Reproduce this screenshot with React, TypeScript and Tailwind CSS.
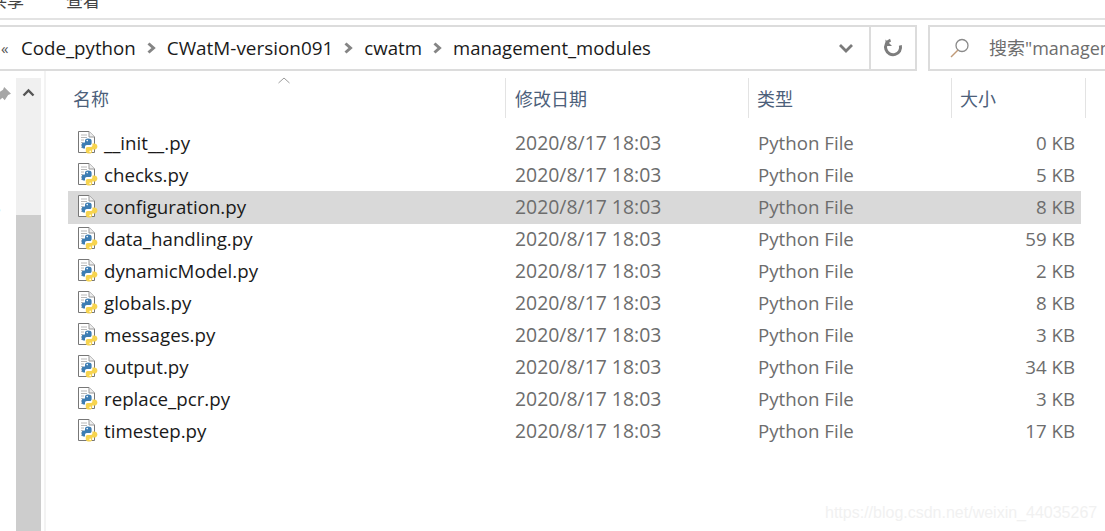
const font = { fontFamily: '"Open Sans", "Noto Sans CJK SC", sans-serif' };

const files = [
  ["__init__.py", "0 KB"],
  ["checks.py", "5 KB"],
  ["configuration.py", "8 KB"],
  ["data_handling.py", "59 KB"],
  ["dynamicModel.py", "2 KB"],
  ["globals.py", "8 KB"],
  ["messages.py", "3 KB"],
  ["output.py", "34 KB"],
  ["replace_pcr.py", "3 KB"],
  ["timestep.py", "17 KB"],
];

function Chevron() {
  return (
    <svg width="9" height="12" viewBox="0 0 9 12" className="shrink-0 mx-[11px]">
      <path d="M1.5 1.5 6.5 6 1.5 10.5" fill="none" stroke="#858585" strokeWidth="3" />
    </svg>
  );
}

function PyIcon() {
  return (
    <svg width="21" height="23" viewBox="0 0 21 23" className="shrink-0">
      <path d="M1.5 .5H12L17.5 6V21.5H1.5Z" fill="#fff" stroke="#777" strokeWidth="1" />
      <path d="M12 .5V6H17.5" fill="#eee" stroke="#999" strokeWidth="1" />
      <path d="M4 4h6M4 6.5h6M4 9h3M4 11.5h2M4 14h2M4 16.5h2" stroke="#b8b8b8" strokeWidth="1" />
      <path d="M11 7.5C8.6 7.5 8 8.5 8 9.8V11.5H6.6C5.2 11.5 4.6 12.8 4.6 14.4S5.2 17.4 6.6 17.4H8V15.8C8 14.8 8.8 14 9.8 14H12.8C13.8 14 14.6 13.2 14.6 12.2V9.8C14.6 8.4 13.2 7.5 11 7.5Z" fill="#3d7db3" />
      <path d="M15.4 12.4V14.2C15.4 15.2 14.6 16 13.6 16H10.6C9.6 16 8.8 16.8 8.8 17.8V20.2C8.8 21.6 10.2 22.5 12.2 22.5C14.4 22.5 15.2 21.6 15.2 20.2V18.5H17.2C19 18.5 20.4 17.4 20.4 15.4S19 12.4 17.2 12.4Z" fill="#f7d44f" />
      <circle cx="10.2" cy="9.6" r="0.8" fill="#fff" />
      <circle cx="13.2" cy="20.4" r="0.8" fill="#fff" />
    </svg>
  );
}

export default function App() {
  return (
    <div className="w-[1105px] h-[531px] overflow-hidden bg-white flex flex-col relative" style={font}>
      {/* ribbon tabs, cut off by the crop */}
      <div className="h-[20px] shrink-0 border-b-2 border-[#e3e3e3] overflow-hidden flex items-end text-[17px] text-[#444] leading-[24px] pb-[5px]">
        <span className="ml-[-10px] w-[76px]">共享</span>
        <span>查看</span>
      </div>

      {/* address + search */}
      <div className="mt-[5px] h-[46px] shrink-0 flex">
        <div className="w-[917px] border-y-2 border-r-2 border-[#dcdcdc] flex items-center text-[18.7px] text-[#1a1a1a]">
          <span className="w-[21px] pl-[1px] text-[15px] text-[#555] leading-none">«</span>
          <span>Code_python</span>
          <Chevron />
          <span className="text-[18.9px]">CWatM-version091</span>
          <Chevron />
          <span>cwatm</span>
          <Chevron />
          <span className="text-[18.5px]">management_modules</span>
          <div className="ml-auto h-full flex items-center">
            <svg width="16" height="10" viewBox="0 0 16 10" className="mr-[15px]">
              <path d="M2 2 8 8 14 2" fill="none" stroke="#7a7a7a" strokeWidth="2.8" />
            </svg>
            <div className="w-[46px] h-full border-l-2 border-[#dcdcdc] flex items-center justify-center">
              <svg width="20" height="20" viewBox="0 0 20 20">
                <path d="M5 3.5A7.5 7.5 0 1 0 16 5" fill="none" stroke="#7d7d7d" strokeWidth="3" transform="rotate(20 10 10)" />
                <path d="M2.5 1.5V8H9Z" fill="#7d7d7d" />
              </svg>
            </div>
          </div>
        </div>
        <div className="ml-[11px] flex-1 border-y-2 border-l-2 border-[#dcdcdc] flex items-center text-[18px] text-[#6d6d6d] overflow-hidden whitespace-nowrap">
          <svg width="20" height="20" viewBox="0 0 20 20" className="ml-[20px] mr-[19px] shrink-0">
            <circle cx="12" cy="7.5" r="6" fill="none" stroke="#8a8a8a" strokeWidth="1.3" />
            <path d="M8 12 1 19" stroke="#c09a78" strokeWidth="1.5" />
          </svg>
          <span>搜索"management_modules"</span>
        </div>
      </div>

      <div className="flex-1 flex min-h-0">
        {/* nav pane edge */}
        <div className="w-[16px] shrink-0 relative overflow-hidden text-[18px] text-[#1a1a1a]">
          <svg width="16" height="16" viewBox="0 0 14 14" className="absolute left-[-5px] top-[16px]">
            <path d="M8 0 14 6 11.5 7 8.5 11.5 6.5 9.5 1 14 0 13 4.5 7.5 2.5 5.5 7 2.5Z" fill="#a6a6a6" />
          </svg>
          <span className="absolute left-[-8px] top-[122px]">s</span>
        </div>

        {/* nav scrollbar */}
        <div className="mt-[7px] w-[25px] shrink-0 bg-[#f0f0f0] flex flex-col">
          <div className="h-[137px] flex justify-center pt-[10px]">
            <svg width="13" height="9" viewBox="0 0 13 9">
              <path d="M1.5 7.5 6.5 2.5 11.5 7.5" fill="none" stroke="#555" strokeWidth="2.4" />
            </svg>
          </div>
          <div className="flex-1 bg-[#cdcdcd]" />
        </div>
        <div className="ml-[3px] w-[2px] shrink-0 bg-[#f3f3f3]" />

        {/* file list */}
        <div className="ml-[22px] flex-1 min-w-0 relative">
          <svg width="12" height="7" viewBox="0 0 12 7" className="absolute left-[210px] top-[6px]">
            <path d="M.5 6 6 1 11.5 6" fill="none" stroke="#9a9a9a" strokeWidth="1" />
          </svg>
          <div className="mt-[7px] h-[40px] flex text-[18px] text-[#4c607a]">
            <div className="w-[437px] pl-[5px] pt-[2px] flex items-center">名称</div>
            <div className="w-[243px] pl-[9px] pt-[2px] flex items-center border-l border-[#e3e3e3]">修改日期</div>
            <div className="w-[203px] pl-[8px] pt-[2px] flex items-center border-l border-[#e3e3e3]">类型</div>
            <div className="w-[135px] pl-[8px] pt-[2px] flex items-center border-l border-r border-[#e3e3e3]">大小</div>
          </div>
          <div className="mt-[9px] w-[1013px] text-[18.7px] text-[#6d6d6d]">
            {files.map(([name, size]) => (
              <div
                key={name}
                className={`flex items-center ${name === "configuration.py" ? "h-[33px] mb-[-1px] pb-[1px] bg-[#d9d9d9]" : "h-[32px]"}`}
              >
                <div className="w-[438px] pl-[9px] flex items-center text-[#1a1a1a]">
                  <PyIcon />
                  <span className="ml-[6px]">{name}</span>
                </div>
                <div className="w-[243px] pl-[9px] text-[19.4px]">2020/8/17 18:03</div>
                <div className="w-[203px] pl-[9px]">Python File</div>
                <div className="w-[123px] text-right">{size}</div>
              </div>
            ))}
          </div>
        </div>
      </div>

      {/* image host watermark */}
      <span
        className="absolute left-[825px] top-[502px] text-[16px] text-[#f1f1f1] leading-[22px] whitespace-nowrap"
        style={{ fontFamily: '"Liberation Sans", sans-serif' }}
      >
        https://blog.csdn.net/weixin_44035267
      </span>
    </div>
  );
}
